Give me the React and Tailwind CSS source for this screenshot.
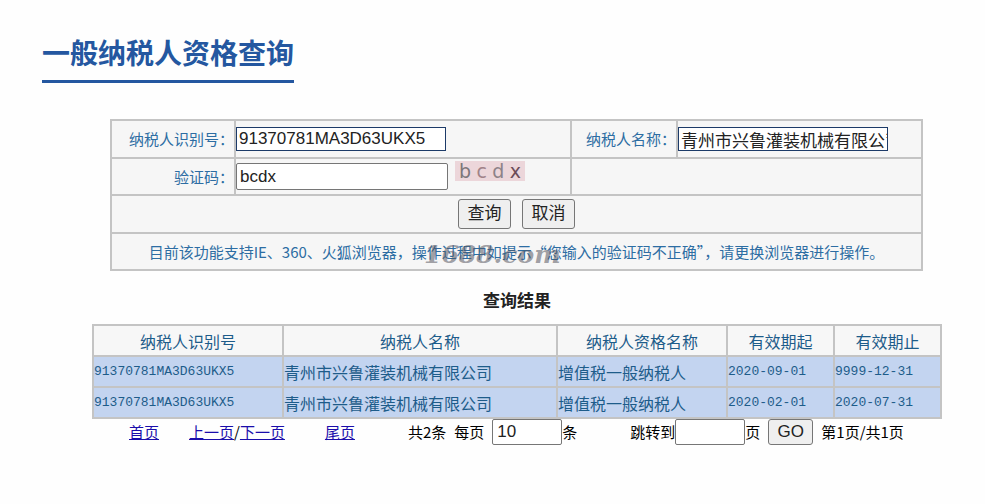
import React, { useState } from 'react';

const records = [
    { id: '91370781MA3D63UKX5', name: '青州市兴鲁灌装机械有限公司', type: '增值税一般纳税人', from: '2020-09-01', to: '9999-12-31' },
    { id: '91370781MA3D63UKX5', name: '青州市兴鲁灌装机械有限公司', type: '增值税一般纳税人', from: '2020-02-01', to: '2020-07-31' },
];

const captcha = [
    { char: 'b', color: 'text-[#7d767a]' },
    { char: 'c', color: 'text-[#a08288]' },
    { char: 'd', color: 'text-[#8c8288]' },
    { char: 'x', color: 'text-[#6b4c58]' },
];

const cell = 'border-2 border-[#c4c4c4] p-0';
const field = 'block border bg-white font-["Liberation_Sans","Noto_Sans_CJK_SC",sans-serif] text-[17px] text-[#222] outline-none';
const button = 'rounded-[3px] border border-[#767676] bg-[#efefef] font-["Liberation_Sans","Noto_Sans_CJK_SC",sans-serif] text-[17px] text-[#222]';

const Captcha = () => (
    <div className="mb-3 flex h-5 w-[70px] items-center justify-between bg-[#ecd6da] px-1 font-['DejaVu_Sans',sans-serif] text-[19px] leading-5">
        {captcha.map(({ char, color }) => (
            <span key={char} className={color}>{char}</span>
        ))}
    </div>
);

const QueryForm = () => {
    const [taxId, setTaxId] = useState('91370781MA3D63UKX5');
    const [name, setName] = useState('青州市兴鲁灌装机械有限公司');
    const [code, setCode] = useState('bcdx');

    const reset = () => {
        setTaxId('');
        setName('');
        setCode('');
    };

    return (
        <form className="relative" onSubmit={e => e.preventDefault()}>
            <table className="w-full table-fixed border-collapse bg-[#f6f6f6] text-[15px] leading-5 text-[#2d6da3]">
                <colgroup>
                    <col className="w-[124px]" />
                    <col className="w-[336px]" />
                    <col className="w-[106px]" />
                    <col />
                </colgroup>
                <tbody>
                    <tr className="h-[38px]">
                        <td className={`${cell} text-right`}><label htmlFor="taxId">纳税人识别号：</label></td>
                        <td className={cell}>
                            <input id="taxId" className={`${field} h-6 w-[210px] border-[#1c3a68] px-[2px]`} value={taxId} onChange={e => setTaxId(e.target.value)} />
                        </td>
                        <td className={`${cell} text-right`}><label htmlFor="name">纳税人名称：</label></td>
                        <td className={cell}>
                            <input id="name" className={`${field} h-6 w-[210px] border-[#1c3a68] pl-[2px]`} value={name} onChange={e => setName(e.target.value)} />
                        </td>
                    </tr>
                    <tr className="h-[37px]">
                        <td className={`${cell} text-right`}><label htmlFor="code">验证码：</label></td>
                        <td className={cell}>
                            <div className="flex items-center gap-[7px]">
                                <input id="code" className={`${field} h-[27px] w-[212px] rounded-[2px] border-[#767676] px-[3px]`} value={code} onChange={e => setCode(e.target.value)} />
                                <Captcha />
                            </div>
                        </td>
                        <td className={cell} colSpan={2}></td>
                    </tr>
                    <tr className="h-[38px]">
                        <td className={cell} colSpan={4}>
                            <div className="flex justify-center gap-[11px]">
                                <button type="submit" className={`${button} h-[30px] w-[53px]`}>查询</button>
                                <button type="button" className={`${button} h-[30px] w-[53px]`} onClick={reset}>取消</button>
                            </div>
                        </td>
                    </tr>
                    <tr className="h-[37px]">
                        <td className={`${cell} text-center`} colSpan={4}>
                            目前该功能支持IE、360、火狐浏览器，操作过程中如提示“您输入的验证码不正确”，请更换浏览器进行操作。
                        </td>
                    </tr>
                </tbody>
            </table>
            {/* Watermark */}
            <span className="pointer-events-none absolute bottom-0 left-[314px] font-['DejaVu_Serif',serif] text-[25px] leading-8 font-bold italic text-[#55555f]/55">1688.com</span>
        </form>
    );
};

const ResultTable = () => (
    <table className="w-full table-fixed border-collapse text-base leading-5 text-[#1d5c8a]">
        <colgroup>
            <col className="w-[190px]" />
            <col className="w-[274px]" />
            <col className="w-[170px]" />
            <col className="w-[107px]" />
            <col />
        </colgroup>
        <thead>
            <tr className="h-[31px] bg-[#f7f7f7]">
                {['纳税人识别号', '纳税人名称', '纳税人资格名称', '有效期起', '有效期止'].map(title => (
                    <th key={title} className={`${cell} font-normal`}>{title}</th>
                ))}
            </tr>
        </thead>
        <tbody>
            {records.map(row => (
                <tr key={row.from} className="h-[31px] bg-[#c3d4f0]">
                    <td className={`${cell} font-['Liberation_Mono',monospace] text-[13px]`}>{row.id}</td>
                    <td className={cell}>{row.name}</td>
                    <td className={cell}>{row.type}</td>
                    <td className={`${cell} font-['Liberation_Mono',monospace] text-[13px]`}>{row.from}</td>
                    <td className={`${cell} font-['Liberation_Mono',monospace] text-[13px]`}>{row.to}</td>
                </tr>
            ))}
        </tbody>
    </table>
);

const Pagination = () => {
    const [pageSize, setPageSize] = useState('10');
    const [page, setPage] = useState('');
    const link = 'text-[#1a0dab] underline';

    return (
        <div className="flex items-center whitespace-nowrap pl-[37px] text-[15px] leading-5 text-black">
            <a href="#first" className={link}>首页</a>
            <div className="ml-[30px]">
                <a href="#prev" className={link}>上一页</a>/<a href="#next" className={link}>下一页</a>
            </div>
            <a href="#last" className={`${link} ml-10`}>尾页</a>
            <span className="ml-[53px]">共2条</span>
            <label htmlFor="pageSize" className="ml-2">每页</label>
            <input id="pageSize" className={`${field} ml-2 h-[26px] w-[70px] rounded-[2px] border-[#767676] px-1`} value={pageSize} onChange={e => setPageSize(e.target.value)} />
            <span>条</span>
            <label htmlFor="page" className="ml-[53px]">跳转到</label>
            <input id="page" className={`${field} h-[26px] w-[70px] rounded-[2px] border-[#767676] px-1`} value={page} onChange={e => setPage(e.target.value)} />
            <span>页</span>
            <button type="button" className={`${button} ml-2 h-[26px] w-[45px]`}>GO</button>
            <span className="ml-2">第1页/共1页</span>
        </div>
    );
};

export default function App() {
    return (
        <main lang="zh-CN" className="min-h-screen bg-[#fefefe] pt-8 font-['Noto_Sans_CJK_SC',sans-serif]">
            <h1 className="ml-[42px] inline-block border-b-3 border-[#2457a0] pb-2 text-[28px] leading-10 font-bold text-[#2457a0]">一般纳税人资格查询</h1>
            <section className="mt-9 pr-[62px] pl-[110px]">
                <QueryForm />
            </section>
            <section className="pr-[43px] pl-[92px]">
                <h2 className="pt-[17px] pb-3 text-center text-[17px] leading-6 font-bold text-[#222]">查询结果</h2>
                <ResultTable />
                <Pagination />
            </section>
        </main>
    );
}
